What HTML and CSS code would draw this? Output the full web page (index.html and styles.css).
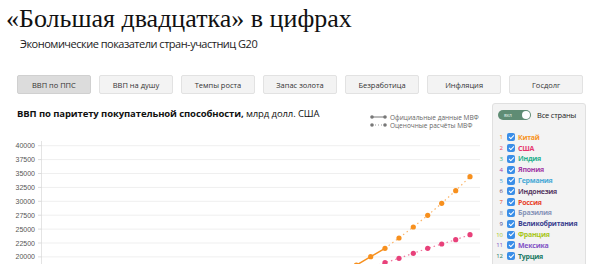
FILE: index.html
```html
<!DOCTYPE html>
<html lang="ru">
<head>
  <meta charset="UTF-8">
  <title>«Большая двадцатка» в цифрах</title>
  <link rel="stylesheet" href="styles.css">
</head>
<body>
  <header class="header">
    <h1>«Большая двадцатка» в цифрах</h1>
    <p class="subtitle">Экономические показатели стран-участниц G20</p>
  </header>

  <nav class="tabs">
    <button class="tab active">ВВП по ППС</button>
    <button class="tab">ВВП на душу</button>
    <button class="tab">Темпы роста</button>
    <button class="tab">Запас золота</button>
    <button class="tab">Безработица</button>
    <button class="tab">Инфляция</button>
    <button class="tab">Госдолг</button>
  </nav>

  <section class="main">
    <div class="chart">
      <div class="chart-head">
        <h2><strong>ВВП по паритету покупательной способности,</strong> млрд долл. США</h2>
        <ul class="legend">
          <li>
            <svg width="17" height="6" viewBox="0 0 17 6"><line x1="2" y1="3" x2="15" y2="3" stroke="#777" stroke-width="1"/><circle cx="2" cy="3" r="1.8" fill="#777"/><circle cx="15" cy="3" r="1.8" fill="#777"/></svg>
            Официальные данные МВФ
          </li>
          <li>
            <svg width="17" height="6" viewBox="0 0 17 6"><line x1="2" y1="3" x2="15" y2="3" stroke="#999" stroke-width="1" stroke-dasharray="1 2"/><circle cx="2" cy="3" r="1.8" fill="#777"/><circle cx="15" cy="3" r="1.8" fill="#777"/></svg>
            Оценочные расчёты МВФ
          </li>
        </ul>
      </div>
      <svg class="plot" width="480" height="130" viewBox="0 0 480 130">
        <g class="grid" stroke="#efefef" stroke-width="1">
          <line x1="42" y1="8.7" x2="480" y2="8.7"/>
          <line x1="42" y1="22.6" x2="480" y2="22.6"/>
          <line x1="42" y1="36.5" x2="480" y2="36.5"/>
          <line x1="42" y1="50.4" x2="480" y2="50.4"/>
          <line x1="42" y1="64.3" x2="480" y2="64.3"/>
          <line x1="42" y1="78.2" x2="480" y2="78.2"/>
          <line x1="42" y1="92.1" x2="480" y2="92.1"/>
          <line x1="42" y1="106" x2="480" y2="106"/>
          <line x1="42" y1="119.9" x2="480" y2="119.9"/>
          <line x1="41.5" y1="4" x2="41.5" y2="130" stroke="#e4e4e4"/>
        </g>
        <g class="ticks" stroke="#ddd" stroke-width="1">
          <line x1="38" y1="8.7" x2="42" y2="8.7"/>
          <line x1="38" y1="22.6" x2="42" y2="22.6"/>
          <line x1="38" y1="36.5" x2="42" y2="36.5"/>
          <line x1="38" y1="50.4" x2="42" y2="50.4"/>
          <line x1="38" y1="64.3" x2="42" y2="64.3"/>
          <line x1="38" y1="78.2" x2="42" y2="78.2"/>
          <line x1="38" y1="92.1" x2="42" y2="92.1"/>
          <line x1="38" y1="106" x2="42" y2="106"/>
          <line x1="38" y1="119.9" x2="42" y2="119.9"/>
        </g>
        <g class="axis-labels" text-anchor="end">
          <text x="35" y="11.2">40000</text>
          <text x="35" y="25.1">37500</text>
          <text x="35" y="39">35000</text>
          <text x="35" y="52.9">32500</text>
          <text x="35" y="66.8">30000</text>
          <text x="35" y="80.7">27500</text>
          <text x="35" y="94.6">25000</text>
          <text x="35" y="108.5">22500</text>
          <text x="35" y="122.4">20000</text>
        </g>

        <!-- США -->
        <polyline points="356.4,134 370.7,130 385,125.7 399,121.3 413.3,116.3 427.7,111.3 441.7,107 455.7,102.7 470,97.7" fill="none" stroke="#f07aa0" stroke-width="1.2" stroke-dasharray="1.5 3"/>
        <g fill="#e8417a">
          <circle cx="385" cy="125.7" r="2.6"/>
          <circle cx="399" cy="121.3" r="2.6"/>
          <circle cx="413.3" cy="116.3" r="2.6"/>
          <circle cx="427.7" cy="111.3" r="2.6"/>
          <circle cx="441.7" cy="107" r="2.6"/>
          <circle cx="455.7" cy="102.7" r="2.6"/>
          <circle cx="470" cy="97.7" r="2.6"/>
        </g>

        <!-- Китай -->
        <polyline points="340,138 356.4,128.1 370.7,119.7 385,111.3" fill="none" stroke="#f7901e" stroke-width="1.5"/>
        <polyline points="385,111.3 399,101 413.3,90 427.7,78.3 441.7,66.3 455.7,53.7 470,39.7" fill="none" stroke="#fbb56a" stroke-width="1.2" stroke-dasharray="1.5 3"/>
        <g fill="#f7901e">
          <circle cx="356.4" cy="128.1" r="2.6"/>
          <circle cx="370.7" cy="119.7" r="2.6"/>
          <circle cx="385" cy="111.3" r="2.6"/>
          <circle cx="399" cy="101" r="2.6"/>
          <circle cx="413.3" cy="90" r="2.6"/>
          <circle cx="427.7" cy="78.3" r="2.6"/>
          <circle cx="441.7" cy="66.3" r="2.6"/>
          <circle cx="455.7" cy="53.7" r="2.6"/>
          <circle cx="470" cy="39.7" r="2.6"/>
        </g>
      </svg>
    </div>

    <aside class="sidebar">
      <div class="all">
        <span class="toggle"><span class="toggle-text">вкл</span><span class="knob"></span></span>
        <span>Все страны</span>
      </div>
      <ul class="countries">
        <li class="c1"><span class="num">1</span><span class="check"></span>Китай</li>
        <li class="c2"><span class="num">2</span><span class="check"></span>США</li>
        <li class="c3"><span class="num">3</span><span class="check"></span>Индия</li>
        <li class="c4"><span class="num">4</span><span class="check"></span>Япония</li>
        <li class="c5"><span class="num">5</span><span class="check"></span>Германия</li>
        <li class="c6"><span class="num">6</span><span class="check"></span>Индонезия</li>
        <li class="c7"><span class="num">7</span><span class="check"></span>Россия</li>
        <li class="c8"><span class="num">8</span><span class="check"></span>Бразилия</li>
        <li class="c9"><span class="num">9</span><span class="check"></span>Великобритания</li>
        <li class="c10"><span class="num">10</span><span class="check"></span>Франция</li>
        <li class="c11"><span class="num">11</span><span class="check"></span>Мексика</li>
        <li class="c12"><span class="num">12</span><span class="check"></span>Турция</li>
      </ul>
    </aside>
  </section>
</body>
</html>
```

FILE: styles.css
```css
* {
  box-sizing: border-box;
  margin: 0;
  padding: 0;
}

body {
  background: #fff;
  color: #222;
  font-family: 'Open Sans', sans-serif;
  overflow: hidden;
}

.header {
  padding: 4px 0 0 6px;
}

.header h1 {
  font-family: 'Liberation Serif', serif;
  font-weight: 400;
  font-size: 26px;
  line-height: 30px;
  color: #111;
}

.subtitle {
  margin: 2px 0 0 14px;
  font-size: 11px;
  line-height: 15px;
  letter-spacing: -0.5px;
  color: #222;
}

.tabs {
  display: flex;
  gap: 8.3px;
  padding: 0 17px;
  margin-top: 24px;
}

.tab {
  width: 74px;
  height: 19px;
  border: 1px solid #e2e2e2;
  border-radius: 2px;
  background: #f3f3f3;
  color: #333;
  font-family: 'Open Sans', sans-serif;
  font-size: 7.5px;
}

.tab.active {
  background: #dcdcdc;
  border-color: #d0d0d0;
}

.main {
  display: flex;
  margin-top: 9px;
}

.chart {
  width: 480px;
}

.chart-head {
  display: flex;
  justify-content: space-between;
  align-items: flex-start;
  height: 34px;
  padding-left: 17px;
}

.chart-head h2 {
  margin-top: 4px;
  font-size: 9.5px;
  line-height: 13px;
  letter-spacing: -0.1px;
  font-weight: 400;
  color: #111;
}

.chart-head strong {
  font-weight: 700;
}

.legend {
  list-style: none;
  margin-top: 10px;
  width: 110px;
  font-size: 6.5px;
  color: #666;
}

.legend li {
  display: flex;
  align-items: center;
  gap: 3px;
  height: 8px;
}

.plot {
  display: block;
}

.axis-labels {
  font-family: 'Liberation Sans', sans-serif;
  font-size: 7px;
  fill: #555;
}

.sidebar {
  width: 94px;
  height: 170px;
  margin-left: 12px;
  padding: 6px 0 0 5px;
  background: #f3f3f3;
  border: 1px solid #e0e0e0;
  border-radius: 3px;
}

.all {
  display: flex;
  align-items: center;
  gap: 6px;
  font-size: 7.5px;
  letter-spacing: -0.2px;
  color: #222;
}

.toggle {
  display: flex;
  align-items: center;
  justify-content: space-between;
  width: 33px;
  height: 10px;
  padding: 0 1px 0 6px;
  border-radius: 5px;
  background: #5f8c74;
}

.toggle-text {
  font-size: 5px;
  color: #dfeee6;
}

.knob {
  width: 8px;
  height: 8px;
  border-radius: 50%;
  background: #fff;
}

.countries {
  list-style: none;
  margin: 12px 0 0 -5px;
}

.countries li {
  display: flex;
  align-items: center;
  height: 10.8px;
  font-size: 7px;
  letter-spacing: -0.25px;
  font-weight: 700;
}

.num {
  width: 10px;
  margin-right: 4px;
  text-align: right;
  font-size: 6px;
  font-weight: 400;
  letter-spacing: 0;
}

.check {
  position: relative;
  width: 8px;
  height: 8px;
  margin-right: 3px;
  border-radius: 2px;
  background: #3a8ee8;
}

.check::after {
  content: "";
  position: absolute;
  left: 2.6px;
  top: 0.8px;
  width: 2px;
  height: 4px;
  border: solid #fff;
  border-width: 0 1.2px 1.2px 0;
  transform: rotate(45deg);
}

.c1 { color: #f7931e; }
.c2 { color: #e6366f; }
.c3 { color: #27b08e; }
.c4 { color: #a23aa6; }
.c5 { color: #49a9d6; }
.c6 { color: #5b3d66; }
.c7 { color: #e8452c; }
.c8 { color: #8895b8; }
.c9 { color: #3a3f8f; }
.c10 { color: #a8c61c; }
.c11 { color: #8456c6; }
.c12 { color: #227a64; }
```
